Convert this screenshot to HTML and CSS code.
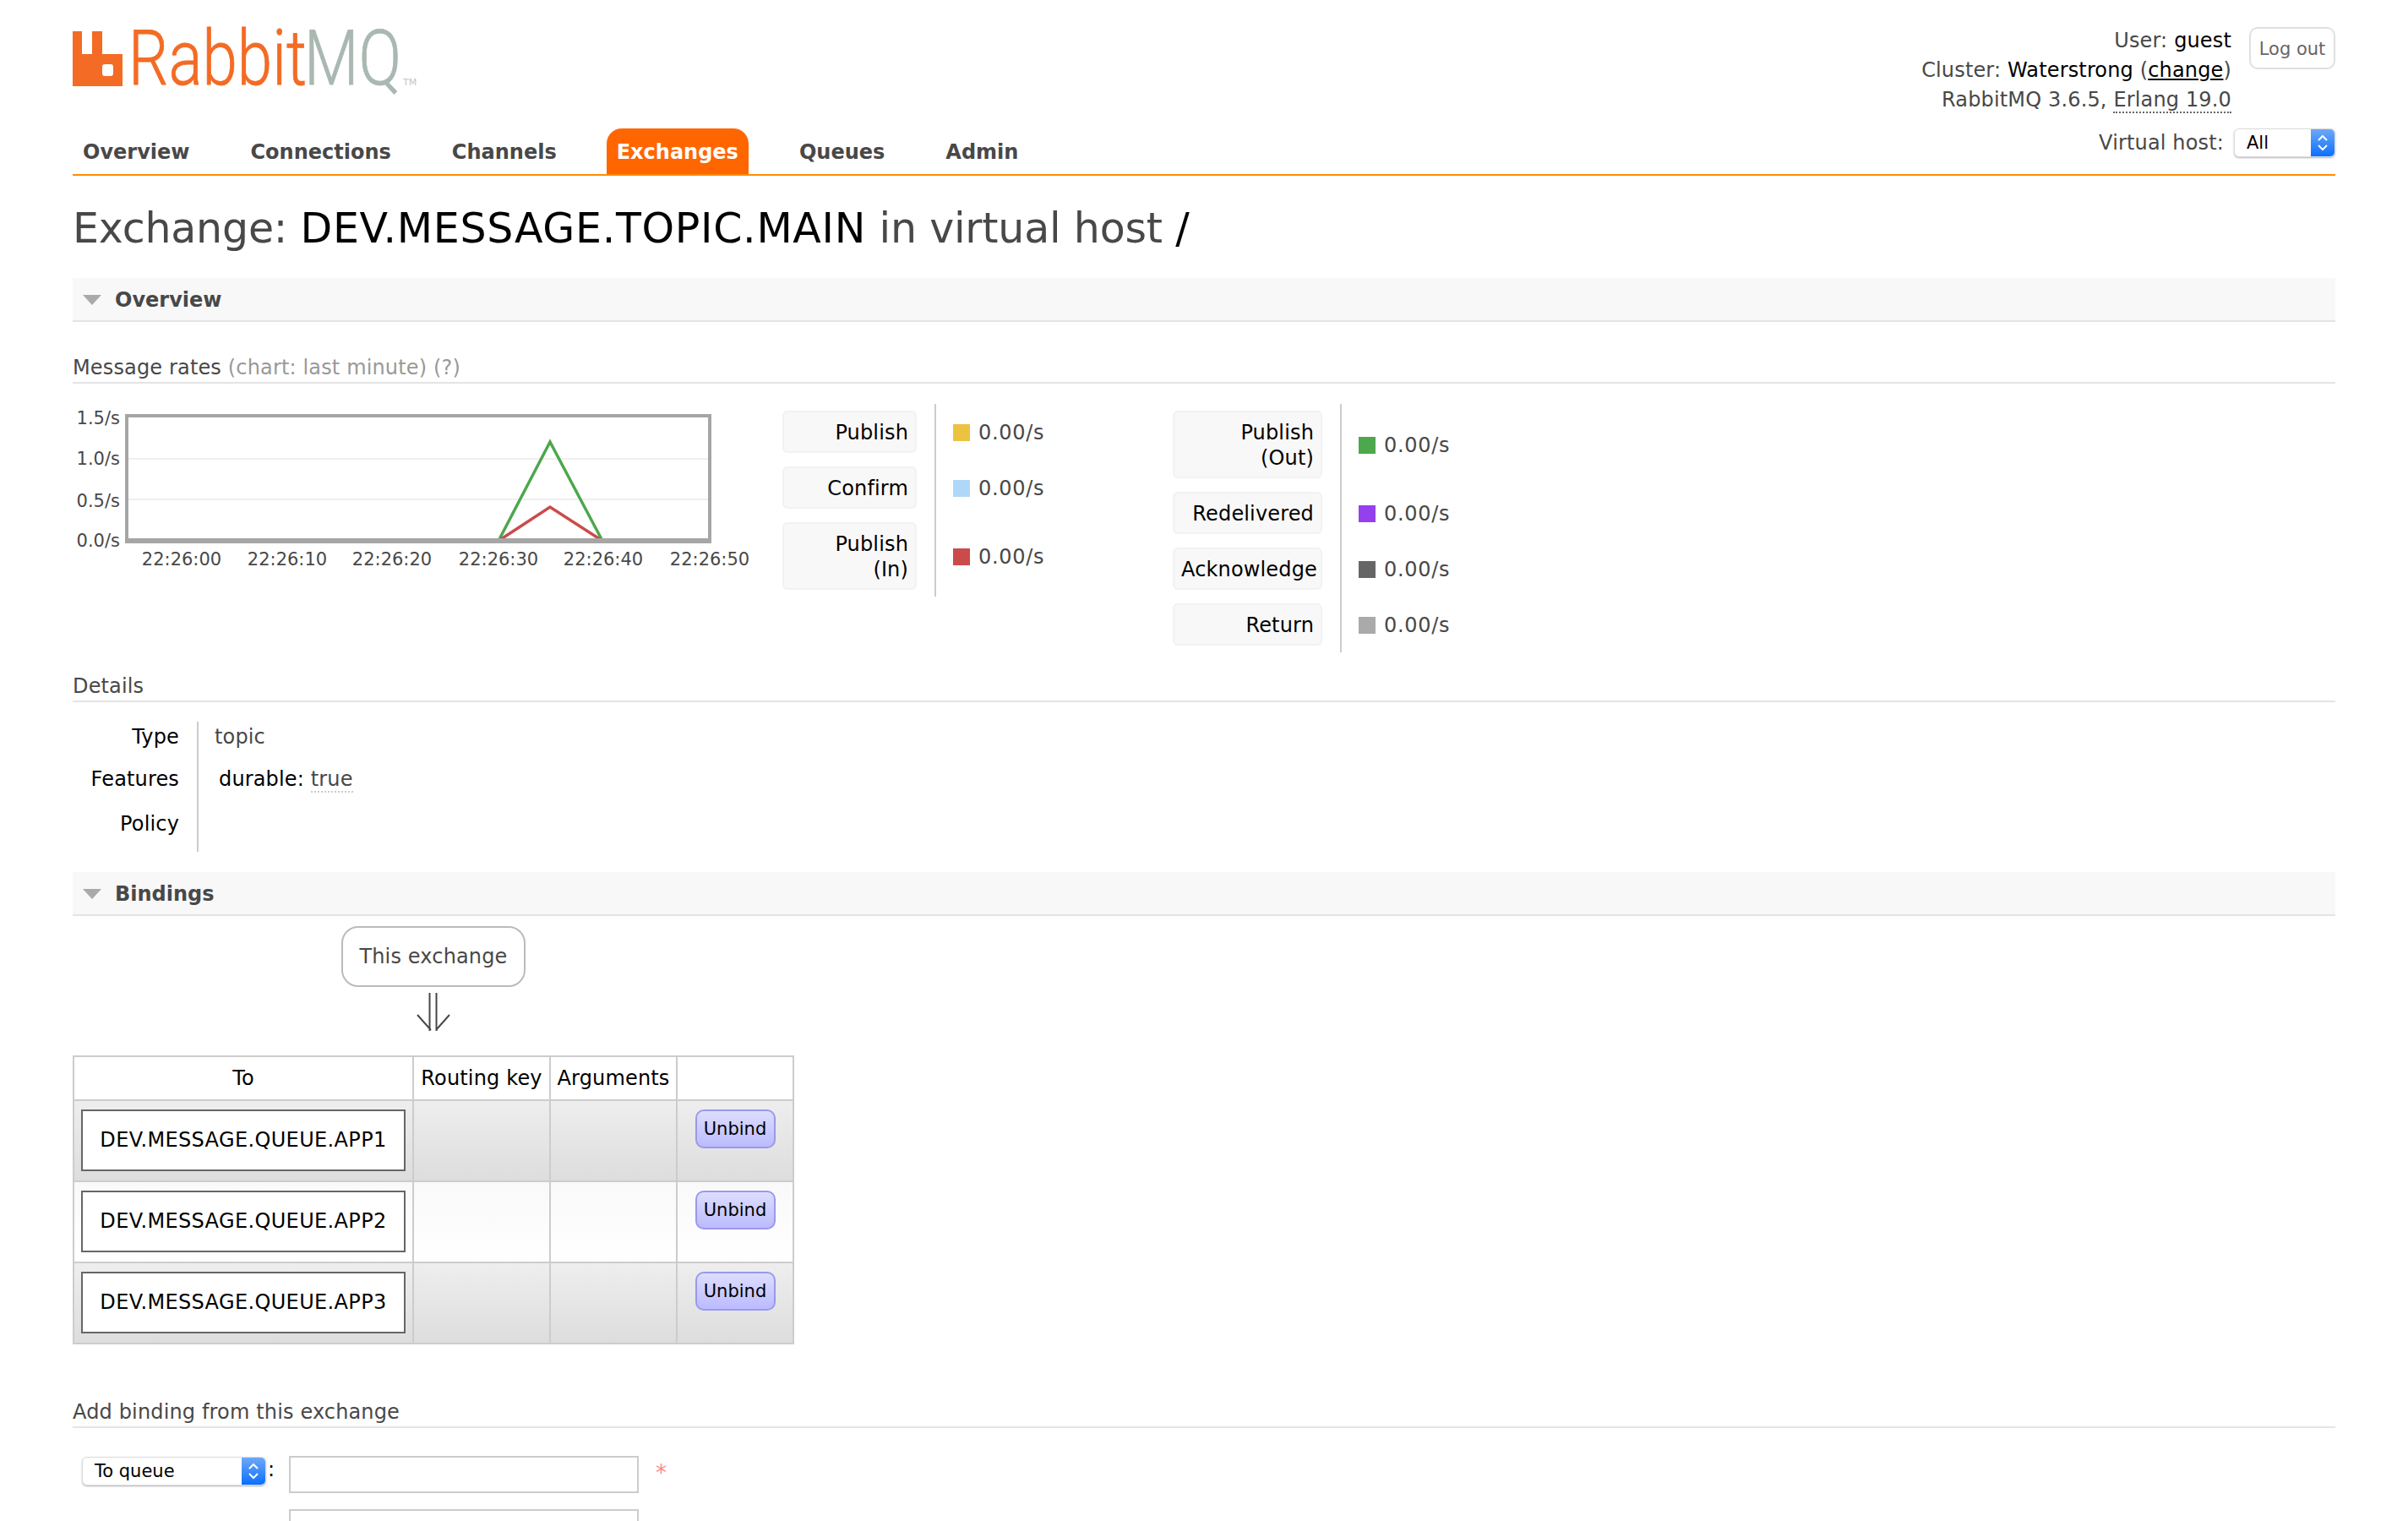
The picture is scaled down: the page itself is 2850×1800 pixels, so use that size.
FILE: index.html
```html
<!DOCTYPE html>
<html lang="en">

<head>
    <meta charset="UTF-8">
    <title>RabbitMQ Management</title>
    <link rel="stylesheet" href="styles.css">
</head>

<body>

    <div class="page">

        <div class="header">
            <div class="headerLeft">
                <svg class="logo" width="420" height="110" viewBox="86 14 420 110">
                    <path fill="#f36b24" fill-rule="evenodd" d="M86 37h11v27h12V37h12v27h24v38H86z M124 76h7a3 3 0 0 1 3 3v8a3 3 0 0 1-3 3h-7a3 3 0 0 1-3-3v-8a3 3 0 0 1 3-3z" />
                    <text class="logoText" transform="translate(152 100) scale(0.82 1)" fill="#f36b24" stroke="#f36b24">Rabbit</text>
                    <text class="logoText" transform="translate(360 100) scale(0.82 1)" fill="#a9b8b1" stroke="#a9b8b1">MQ</text>
                    <text class="logoTm" x="477" y="101">TM</text>
                </svg>
                <div class="nav">
                    <a class="tab">Overview</a>
                    <a class="tab">Connections</a>
                    <a class="tab">Channels</a>
                    <a class="tab tabActive">Exchanges</a>
                    <a class="tab">Queues</a>
                    <a class="tab">Admin</a>
                </div>
            </div>
            <div class="headerRight">
                <div class="login">
                    <div class="loginText">
                        <div>User: <b class="dark">guest</b></div>
                        <div>Cluster: <b class="dark">Waterstrong</b> (<a class="dark underline">change</a>)</div>
                        <div>RabbitMQ 3.6.5, <span class="dotted">Erlang 19.0</span></div>
                    </div>
                    <button class="logout">Log out</button>
                </div>
                <div class="vhost">
                    <span>Virtual host:</span>
                    <div class="select selectVhost">
                        <span class="selectText">All</span>
                        <span class="selectArrow">
                            <svg width="16" height="24" viewBox="0 0 16 24"><path d="M3 9l5-5 5 5M3 15l5 5 5-5" fill="none" stroke="#fff" stroke-width="2" /></svg>
                        </span>
                    </div>
                </div>
            </div>
        </div>

        <h1>Exchange: <b class="dark">DEV.MESSAGE.TOPIC.MAIN</b> in virtual host <b class="dark">/</b></h1>

        <div class="sectionBar"><span class="triangle"></span>Overview</div>

        <h3 class="sub">Message rates <span class="muted">(chart: last minute) (?)</span></h3>

        <div class="rates">
            <svg class="chart" width="840" height="220" viewBox="86 478 840 220">
                <rect x="150" y="492" width="690" height="149" fill="#fff" />
                <line x1="150" x2="840" y1="543" y2="543" stroke="#efefef" stroke-width="2" />
                <line x1="150" x2="840" y1="591" y2="591" stroke="#efefef" stroke-width="2" />
                <polyline points="590,640 651,523 713,640" fill="none" stroke="#4da74d" stroke-width="3.5" />
                <polyline points="590,640 651,600 713,640" fill="none" stroke="#cb4b4b" stroke-width="3.5" />
                <path d="M150 492h690v147H150z" fill="none" stroke="#a6a6a6" stroke-width="4" />
                <rect x="148" y="637" width="694" height="6" fill="#a6a6a6" />
                <g class="chartText" text-anchor="end">
                    <text x="142" y="502">1.5/s</text>
                    <text x="142" y="550">1.0/s</text>
                    <text x="142" y="600">0.5/s</text>
                    <text x="142" y="647">0.0/s</text>
                </g>
                <g class="chartText" text-anchor="middle">
                    <text x="215" y="669">22:26:00</text>
                    <text x="340" y="669">22:26:10</text>
                    <text x="464" y="669">22:26:20</text>
                    <text x="590" y="669">22:26:30</text>
                    <text x="714" y="669">22:26:40</text>
                    <text x="840" y="669">22:26:50</text>
                </g>
            </svg>

            <table class="rateTable rateTableFirst">
                <tr>
                    <th><span class="rateLabel">Publish</span></th>
                    <td><span class="swatch swatchYellow"></span>0.00/s</td>
                </tr>
                <tr>
                    <th><span class="rateLabel">Confirm</span></th>
                    <td><span class="swatch swatchBlue"></span>0.00/s</td>
                </tr>
                <tr>
                    <th><span class="rateLabel">Publish<br>(In)</span></th>
                    <td><span class="swatch swatchRed"></span>0.00/s</td>
                </tr>
            </table>

            <table class="rateTable rateTableSecond">
                <tr>
                    <th><span class="rateLabel">Publish<br>(Out)</span></th>
                    <td><span class="swatch swatchGreen"></span>0.00/s</td>
                </tr>
                <tr>
                    <th><span class="rateLabel">Redelivered</span></th>
                    <td><span class="swatch swatchPurple"></span>0.00/s</td>
                </tr>
                <tr>
                    <th><span class="rateLabel">Acknowledge</span></th>
                    <td><span class="swatch swatchDark"></span>0.00/s</td>
                </tr>
                <tr>
                    <th><span class="rateLabel">Return</span></th>
                    <td><span class="swatch swatchGrey"></span>0.00/s</td>
                </tr>
            </table>
        </div>

        <h3 class="sub subDetails">Details</h3>

        <table class="details">
            <tr>
                <th>Type</th>
                <td>topic</td>
            </tr>
            <tr>
                <th>Features</th>
                <td><span class="feature">durable: <span class="dottedLight">true</span></span></td>
            </tr>
            <tr>
                <th>Policy</th>
                <td></td>
            </tr>
        </table>

        <div class="sectionBar sectionBindings"><span class="triangle"></span>Bindings</div>

        <div class="thisExchange">This exchange</div>
        <svg class="arrow" width="44" height="46" viewBox="0 0 44 46">
            <path d="M16.5 0V45M24.5 0V45M2 26l16 18M40 26L24 44" fill="none" stroke="#484848" stroke-width="2" />
        </svg>

        <table class="bindings">
            <colgroup>
                <col class="colTo">
                <col class="colKey">
                <col class="colArgs">
                <col class="colBtn">
            </colgroup>
            <tr>
                <th>To</th>
                <th>Routing key</th>
                <th>Arguments</th>
                <th></th>
            </tr>
            <tr class="rowOdd">
                <td><span class="queue">DEV.MESSAGE.QUEUE.APP1</span></td>
                <td></td>
                <td></td>
                <td><button class="unbind">Unbind</button></td>
            </tr>
            <tr class="rowEven">
                <td><span class="queue">DEV.MESSAGE.QUEUE.APP2</span></td>
                <td></td>
                <td></td>
                <td><button class="unbind">Unbind</button></td>
            </tr>
            <tr class="rowOdd">
                <td><span class="queue">DEV.MESSAGE.QUEUE.APP3</span></td>
                <td></td>
                <td></td>
                <td><button class="unbind">Unbind</button></td>
            </tr>
        </table>

        <h3 class="sub subAdd">Add binding from this exchange</h3>

        <div class="formRow">
            <div class="select selectQueue">
                <span class="selectText">To queue</span>
                <span class="selectArrow">
                    <svg width="16" height="24" viewBox="0 0 16 24"><path d="M3 9l5-5 5 5M3 15l5 5 5-5" fill="none" stroke="#fff" stroke-width="2" /></svg>
                </span>
            </div>
            <span class="colon">:</span>
            <input class="input" type="text">
            <span class="star">*</span>
        </div>
        <div class="formRow formRowNext">
            <input class="input" type="text">
        </div>

    </div>

</body>

</html>
```
FILE: styles.css
```css
html, body {
    margin: 0;
    height: 1800px;
    overflow: hidden;
    background: #fff;
}

body {
    font-family: 'DejaVu Sans', sans-serif;
    font-size: 24px;
    line-height: 30px;
    letter-spacing: 0.15px;
    color: #484848;
}

.page {
    padding: 0 86px;
}

.dark {
    color: #000;
    font-weight: normal;
}

.underline {
    text-decoration: underline;
}

.dotted {
    border-bottom: 2px dotted #666;
}

.header {
    display: flex;
    justify-content: space-between;
    height: 206px;
    border-bottom: 2px solid #ff8c00;
}

.headerLeft {
    display: flex;
    flex-direction: column;
    justify-content: space-between;
    padding-top: 14px;
}

.logo {
    display: block;
}

.logoText {
    font-family: 'Roboto', sans-serif;
    font-weight: 300;
    font-size: 91px;
    letter-spacing: 0;
    stroke-width: 0.8px;
}

.logoTm {
    font-size: 11px;
    letter-spacing: 0;
    fill: #c4c4c4;
}

.nav {
    display: flex;
    gap: 48px;
}

.tab {
    padding: 12px 12px 10px;
    height: 32px;
    font-weight: bold;
    font-size: 24px;
    line-height: 32px;
    letter-spacing: 0;
    border-radius: 18px 18px 0 0;
}

.tabActive {
    margin-left: -1px;
    background: #ff6600;
    color: #fff;
}

.headerRight {
    display: flex;
    flex-direction: column;
    align-items: flex-end;
    padding-top: 31px;
}

.login {
    display: flex;
    gap: 21px;
}

.loginText {
    text-align: right;
    line-height: 35px;
}

.logout {
    width: 102px;
    height: 50px;
    margin-top: 1px;
    padding: 2px 0 0;
    background: #fff;
    border: 2px solid #e0e0e0;
    border-radius: 10px;
    font-family: inherit;
    font-size: 21px;
    color: #666;
}

.vhost {
    display: flex;
    align-items: center;
    gap: 12px;
    margin-top: 16px;
}

.select {
    display: flex;
    justify-content: space-between;
    height: 34px;
    box-sizing: border-box;
    background: #fff;
    border: 1px solid #dcdcdc;
    border-radius: 6px;
    box-shadow: 0 1px 2px rgba(0, 0, 0, 0.3);
    font-size: 21px;
    line-height: 32px;
    letter-spacing: 0;
    color: #000;
    overflow: hidden;
}

.selectVhost {
    width: 120px;
}

.selectQueue {
    width: 218px;
}

.selectText {
    padding-left: 14px;
}

.selectArrow {
    display: flex;
    align-items: center;
    justify-content: center;
    width: 28px;
    background: linear-gradient(#6ea8f8, #0a70ff);
}

h1 {
    margin: 33px 0 28px;
    font-size: 49px;
    font-weight: normal;
    line-height: 60px;
    letter-spacing: -0.2px;
}

h1 .dark {
    letter-spacing: 0.7px;
}

.sectionBar {
    display: flex;
    align-items: center;
    height: 49px;
    padding: 1px 0 0 12px;
    background: #f8f8f8;
    border-bottom: 2px solid #e4e4e4;
    font-weight: bold;
    font-size: 24px;
    letter-spacing: 0;
}

.triangle {
    width: 0;
    height: 0;
    margin-right: 16px;
    border-left: 11px solid transparent;
    border-right: 11px solid transparent;
    border-top: 12px solid #aaa;
}

.sub {
    margin: 35px 0 0;
    padding: 4px 0 2px;
    border-bottom: 2px solid #e4e4e4;
    font-size: 24px;
    font-weight: normal;
    line-height: 30px;
}

.muted {
    color: #999;
}

.rates {
    display: flex;
    align-items: flex-start;
    margin-top: 24px;
}

.chart {
    flex: none;
    display: block;
}

.chartText {
    font-size: 21px;
    letter-spacing: 0;
    fill: #484848;
}

.rateTable {
    flex: none;
    border-collapse: separate;
    border-spacing: 0;
    table-layout: fixed;
}

.rateTable th {
    padding: 8px 21px 8px 0;
    border-right: 2px solid #ccc;
    font-weight: normal;
    color: #000;
}

.rateTable td {
    padding: 2px 0 0 20px;
    white-space: nowrap;
    letter-spacing: 0.7px;
}

.rateTableFirst {
    width: 462px;
}

.rateTableFirst th {
    width: 159px;
}

.rateTableSecond th {
    width: 177px;
}

.rateLabel {
    display: block;
    box-sizing: border-box;
    padding: 9px 8px 7px;
    background: #f8f8f8;
    border: 2px solid #f2f2f2;
    border-radius: 6px;
    text-align: right;
}

.rateTableFirst .rateLabel {
    width: 159px;
}

.rateTableSecond .rateLabel {
    width: 177px;
}

.swatch {
    display: inline-block;
    width: 20px;
    height: 20px;
    margin-right: 10px;
    vertical-align: -2px;
}

.swatchYellow { background: #edc240; }
.swatchBlue { background: #afd8f8; }
.swatchRed { background: #cb4b4b; }
.swatchGreen { background: #4da74d; }
.swatchPurple { background: #9440ed; }
.swatchDark { background: #666; }
.swatchGrey { background: #aaa; }

.subDetails {
    margin-top: 21px;
}

.details {
    margin-top: 23px;
    border-collapse: separate;
    border-spacing: 0;
}

.details th {
    width: 126px;
    padding: 12px 21px 9px 0;
    border-right: 2px solid #ccc;
    font-weight: normal;
    text-align: right;
    color: #000;
}

.details td {
    padding: 12px 0 9px 19px;
    vertical-align: top;
}

.details tr:first-child th,
.details tr:first-child td {
    padding-top: 3px;
    padding-bottom: 8px;
}

.details tr:last-child th,
.details tr:last-child td {
    padding-top: 14px;
    padding-bottom: 18px;
}

.feature {
    margin-left: 5px;
    color: #000;
}

.dottedLight {
    color: #484848;
    border-bottom: 2px dotted #ccc;
}

.sectionBindings {
    margin-top: 24px;
}

.thisExchange {
    width: 218px;
    height: 72px;
    box-sizing: border-box;
    margin: 12px 0 0 318px;
    border: 2px solid #bbb;
    border-radius: 20px;
    text-align: center;
    line-height: 69px;
}

.arrow {
    display: block;
    margin: 7px 0 0 406px;
}

.bindings {
    margin-top: 28px;
    width: 852px;
    border-collapse: collapse;
    table-layout: fixed;
}

.colTo { width: 402px; }
.colKey { width: 162px; }
.colArgs { width: 150px; }
.colBtn { width: 138px; }

.bindings th,
.bindings td {
    border: 2px solid #ccc;
    padding: 0;
    text-align: center;
    vertical-align: top;
}

.bindings th {
    height: 52px;
    box-sizing: border-box;
    font-weight: normal;
    color: #000;
    line-height: 50px;
    white-space: nowrap;
}

.bindings td {
    height: 96px;
    padding-top: 10px;
    box-sizing: border-box;
}

.rowOdd {
    background: linear-gradient(#eee, #ddd);
}

.rowEven {
    background: linear-gradient(#f9f9f9, #fff);
}

.queue {
    display: block;
    box-sizing: border-box;
    width: 384px;
    height: 73px;
    margin-left: 8px;
    background: #fff;
    border: 2px solid #666;
    line-height: 69px;
    letter-spacing: 0.36px;
    color: #000;
}

.unbind {
    width: 95px;
    height: 46px;
    padding: 0;
    background: linear-gradient(#ddf, #bbf);
    border: 2px solid #99e;
    border-radius: 10px;
    font-family: inherit;
    font-size: 21px;
    color: #000;
}

.subAdd {
    margin-top: 61px;
}

.formRow {
    display: flex;
    align-items: flex-start;
    margin-top: 34px;
    padding-left: 11px;
}

.formRowNext {
    margin-top: 20px;
    padding-left: 256px;
}

.colon {
    width: 27px;
    padding-left: 2px;
    box-sizing: border-box;
    color: #000;
}

.input {
    display: block;
    width: 414px;
    height: 44px;
    box-sizing: border-box;
    margin-top: -1px;
    padding: 0;
    background: #fff;
    border: 2px solid #ccc;
}

.star {
    margin-left: 20px;
    color: #f88;
    font-size: 26px;
    line-height: 38px;
}
```
